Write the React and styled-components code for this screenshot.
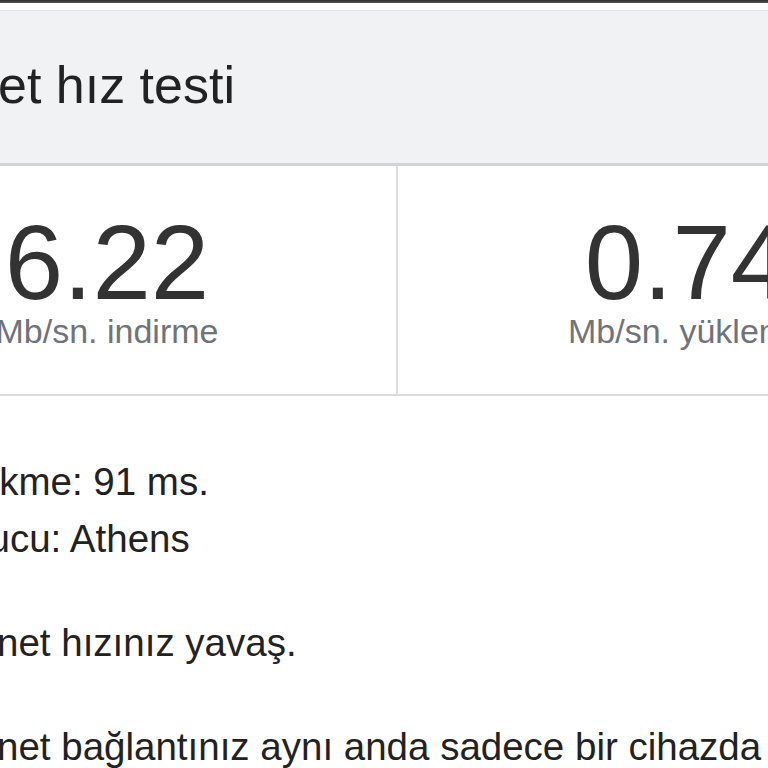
import React from "react";
import styled, { createGlobalStyle } from "styled-components";

const GlobalStyle = createGlobalStyle`
  html, body {
    margin: 0;
    padding: 0;
    background: #ffffff;
    overflow: hidden;
  }
  body {
    font-family: "Liberation Sans", Arial, sans-serif;
    color: #202124;
  }
`;

const Viewport = styled.div`
  width: 768px;
  height: 768px;
  overflow: hidden;
`;

// the card is wider than the window, its left part lies off screen
const Card = styled.div`
  width: 1158px;
  margin-left: -182px;
  background: #ffffff;
`;

const TopBar = styled.div`
  height: 3px;
  background: linear-gradient(#2e2e2e, #555555);
  margin-bottom: 7px;
`;

const Header = styled.div`
  background: #f1f2f4;
  border-top: 1px solid #e6e7e9;
  border-bottom: 3px solid #d2d3d5;
  padding: 44px 0 48px 47px;
`;

const Title = styled.h1`
  margin: 0;
  font-size: 52px;
  line-height: 60px;
  font-weight: 400;
  color: #222222;
  white-space: nowrap;
`;

const Stats = styled.div`
  display: grid;
  grid-template-columns: 578px 578px;
  column-gap: 2px;
  background: #dcdde0;
  border-bottom: 2px solid #dadbde;
`;

const Stat = styled.div`
  background: #ffffff;
  padding: 48px 0 44px;
  display: flex;
  flex-direction: column;
  align-items: center;
`;

const Value = styled.div`
  font-size: 105px;
  line-height: 98px;
  color: #333333;
`;

const Unit = styled.div`
  font-size: 34px;
  line-height: 38px;
  color: #6f7479;
  white-space: nowrap;
`;

const Body = styled.div`
  padding: 57px 0 0 102px;
  font-size: 38.5px;
  line-height: 57px;
  color: #222222;
`;

const Para = styled.p`
  margin: 0 0 47px;
  white-space: nowrap;
`;

const stats = [
  { value: "6.22", unit: "Mb/sn. indirme" },
  { value: "0.74", unit: "Mb/sn. yükleme" },
];

export default function App() {
  return (
    <Viewport>
      <GlobalStyle />
      <TopBar />
      <Card>
        <Header>
          <Title>İnternet hız testi</Title>
        </Header>
        <Stats>
          {stats.map((s) => (
            <Stat key={s.unit}>
              <Value>{s.value}</Value>
              <Unit>{s.unit}</Unit>
            </Stat>
          ))}
        </Stats>
        <Body>
          <Para>
            Gecikme: 91 ms.
            <br />
            Sunucu: Athens
          </Para>
          <Para>İnternet hızınız yavaş.</Para>
          <Para>İnternet bağlantınız aynı anda sadece bir cihazda video oynatabilir.</Para>
        </Body>
      </Card>
    </Viewport>
  );
}
